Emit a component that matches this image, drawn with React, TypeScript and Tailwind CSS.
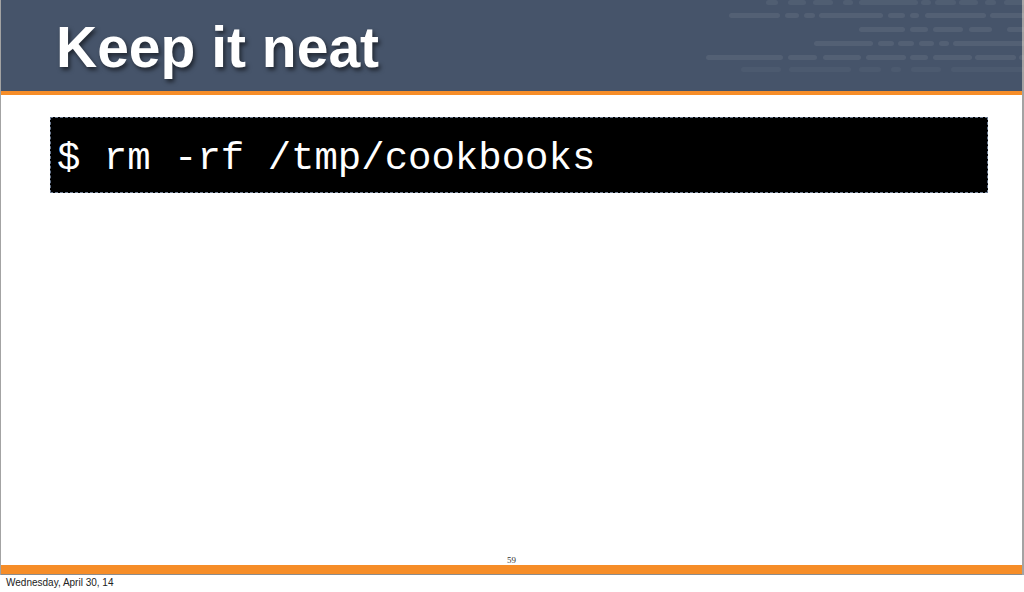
import React from "react";

// faint dash pattern in the header's right corner
const rows: { y: number; o: number; segs: [number, number][] }[] = [
  { y: 0, o: 0.06, segs: [[765, 777], [787, 805], [812, 832], [842, 852], [858, 917], [920, 930], [934, 955], [958, 977], [984, 995], [1003, 1024]] },
  { y: 13, o: 0.07, segs: [[728, 779], [784, 798], [803, 814], [818, 882], [887, 904], [909, 918], [924, 985], [989, 1024]] },
  { y: 27, o: 0.07, segs: [[858, 904], [909, 927], [932, 962], [968, 991], [1006, 1024]] },
  { y: 41, o: 0.07, segs: [[813, 872], [877, 893], [897, 913], [918, 933], [938, 948], [952, 1024]] },
  { y: 55, o: 0.07, segs: [[705, 782], [787, 816], [822, 860], [865, 905], [909, 927], [932, 971], [974, 1015], [1018, 1024]] },
  { y: 67, o: 0.035, segs: [[740, 780], [788, 850], [858, 880], [890, 900], [910, 940], [950, 1024]] },
];

function HeaderPattern() {
  return (
    <svg className="absolute left-0 top-0" width="1024" height="91" viewBox="0 0 1024 91">
      {rows.map((r, i) =>
        r.segs.map(([a, b], j) => (
          <rect key={`${i}-${j}`} x={a} y={r.y} width={b - a} height={5} rx={2.5} fill="#ffffff" fillOpacity={r.o} />
        ))
      )}
    </svg>
  );
}

export default function App() {
  return (
    <div className="w-[1024px] h-[592px] bg-white flex flex-col overflow-hidden font-['Liberation_Sans',Arial,sans-serif]">
      <div className="h-[575px] flex flex-col border-l border-r-2 border-[#a3a3a3]">
        <header className="relative h-[91px] bg-[#46546a]">
          <HeaderPattern />
          <h1 className="relative pl-[55px] pt-[19px] text-[57px] leading-[57px] font-bold text-white [text-shadow:2px_3px_4px_rgba(0,0,0,0.55)]">
            Keep it neat
          </h1>
        </header>
        <div className="h-[4px] bg-[#f68d28]" />

        <div className="flex-1 flex flex-col">
          <div className="ml-[49px] mt-[22px] w-[938px] h-[76px] bg-black border border-dashed border-[#6b7a90]">
            <div className="pl-[6px] pt-[20px] text-[39px] leading-[43px] text-white font-['Liberation_Mono','Courier_New',monospace] whitespace-pre">
              $ rm -rf /tmp/cookbooks
            </div>
          </div>
          <div className="mt-auto text-center text-[9px] leading-[9px] text-[#333] font-['Liberation_Serif',serif]">59</div>
        </div>

        <div className="h-[9px] bg-[#f68d28] border-b border-[#8c8c8c] box-content" />
      </div>
      <div className="pl-[6px] pt-[2px] text-[10px] leading-[12px] text-[#222]">Wednesday, April 30, 14</div>
    </div>
  );
}
